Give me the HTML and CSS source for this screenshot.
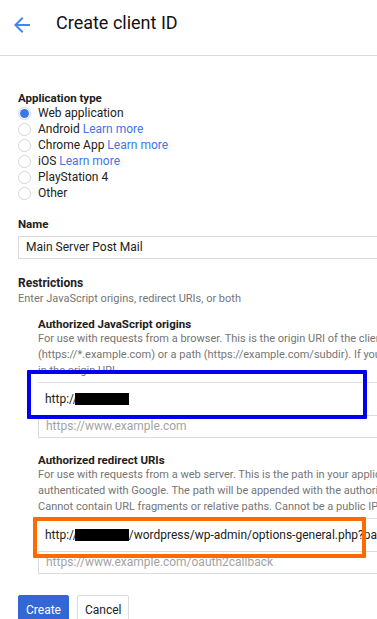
FILE: index.html
```html
<!DOCTYPE html>
<html lang="en">
<head>
  <meta charset="UTF-8">
  <meta name="viewport" content="width=device-width, initial-scale=1.0">
  <title>Create client ID</title>
  <link rel="stylesheet" href="styles.css">
</head>
<body>
  <header class="topbar">
    <svg class="back-icon" xmlns="http://www.w3.org/2000/svg" viewBox="0 0 24 24">
      <path d="M20 11H7.83l5.59-5.59L12 4l-8 8 8 8 1.41-1.41L7.83 13H20v-2z"/>
    </svg>
    <h1>Create client ID</h1>
  </header>

  <main class="content">
    <div class="field-label app-type">Application type</div>
    <div class="radio-list">
      <div class="radio-row"><span class="radio checked"></span>Web application</div>
      <div class="radio-row"><span class="radio"></span>Android&nbsp;<a class="link">Learn more</a></div>
      <div class="radio-row"><span class="radio"></span>Chrome App&nbsp;<a class="link">Learn more</a></div>
      <div class="radio-row"><span class="radio"></span>iOS&nbsp;<a class="link">Learn more</a></div>
      <div class="radio-row"><span class="radio"></span>PlayStation 4</div>
      <div class="radio-row"><span class="radio"></span>Other</div>
    </div>

    <div class="field-label name-label">Name</div>
    <div class="text-input">Main Server Post Mail</div>

    <h2 class="section-title">Restrictions</h2>
    <p class="hint">Enter JavaScript origins, redirect URIs, or both</p>

    <div class="uri-group origins">
      <div class="field-label">Authorized JavaScript origins</div>
      <div class="hint-lines">
        <div>For use with requests from a browser. This is the origin URI of the client application. It can't contain a wildcard</div>
        <div>(https://*.example.com) or a path (https://example.com/subdir). If you're using a nonstandard port, you must include it</div>
        <div>in the origin URI.</div>
      </div>
      <div class="uri-row">http://<span class="redacted"></span></div>
      <div class="uri-input">https://www.example.com</div>
      <div class="mark mark-blue"></div>
    </div>

    <div class="uri-group redirects">
      <div class="field-label">Authorized redirect URIs</div>
      <div class="hint-lines">
        <div>For use with requests from a web server. This is the path in your application that users are redirected to after they have</div>
        <div>authenticated with Google. The path will be appended with the authorization code for access. Must have a protocol.</div>
        <div>Cannot contain URL fragments or relative paths. Cannot be a public IP address.</div>
      </div>
      <div class="uri-row">http://<span class="redacted"></span>/wordpress/wp-admin/options-general.php?page=wp-mail-smtp</div>
      <div class="uri-input">https://www.example.com/oauth2callback</div>
      <div class="mark mark-orange"></div>
    </div>

    <div class="actions">
      <button class="btn btn-primary">Create</button>
      <button class="btn">Cancel</button>
    </div>
  </main>
</body>
</html>
```

FILE: styles.css
```css
/* base */
* {
  margin: 0;
  padding: 0;
  box-sizing: border-box;
}

html,
body {
  overflow: hidden;
}

body {
  font-family: Roboto, 'Liberation Sans', sans-serif;
  color: #212121;
  background-color: #fff;
}

/* header */
.topbar {
  display: flex;
  align-items: center;
  height: 56px;
  padding: 0 0 10px 10px;
  border-bottom: 1px solid #dadada;
}

.back-icon {
  width: 24px;
  height: 24px;
  margin-top: 5px;
  fill: #4285f4;
}

.topbar h1 {
  margin-left: 22px;
  font-size: 18px;
  font-weight: 400;
  color: #111;
}

/* form */
.content {
  width: 640px;
  padding-left: 18px;
}

.field-label {
  font-size: 11.5px;
  font-weight: 700;
  line-height: 14px;
}

.app-type {
  margin-top: 35px;
}

.radio-row {
  display: flex;
  align-items: center;
  height: 16px;
  font-size: 12px;
}

.radio {
  position: relative;
  width: 13px;
  height: 13px;
  margin-right: 7px;
  border: 1px solid #d6d6d6;
  border-radius: 50%;
}

.radio.checked::after {
  content: '';
  position: absolute;
  top: 1px;
  left: 1px;
  width: 9px;
  height: 9px;
  border-radius: 50%;
  background-color: #3b78e7;
}

.link {
  color: #3b78e7;
}

.name-label {
  margin-top: 16px;
}

.text-input {
  width: 600px;
  height: 23px;
  margin-top: 5px;
  padding-left: 7px;
  border: 1px solid #dadada;
  font-size: 12px;
  line-height: 21px;
}

.section-title {
  margin-top: 16px;
  font-size: 12px;
  font-weight: 700;
  line-height: 16px;
}

.hint {
  font-size: 11px;
  line-height: 16px;
  color: #757575;
}

/* uri lists */
.uri-group {
  position: relative;
  margin: 10px 0 0 20px;
}

.uri-group.redirects {
  margin-top: 15px;
}

.hint-lines {
  font-size: 11px;
  line-height: 16px;
  color: #757575;
  white-space: nowrap;
}

.uri-row {
  display: flex;
  align-items: center;
  height: 33px;
  margin-top: 3px;
  padding-left: 7px;
  border-top: 1px solid #e0e0e0;
  font-size: 12px;
  white-space: nowrap;
}

.redacted {
  display: inline-block;
  width: 54px;
  height: 12px;
  margin-left: -3px;
  background-color: #000;
}

.uri-input {
  height: 23px;
  padding-left: 7px;
  border: 1px solid #dadada;
  font-size: 12px;
  line-height: 21px;
  color: #a3a3a3;
}

/* annotation boxes drawn over the screenshot */
.mark {
  position: absolute;
  border: 4px solid;
  border-radius: 1px;
}

.mark-blue {
  left: -11px;
  top: 53px;
  width: 340px;
  height: 49px;
  border-color: #0000f0;
}

.mark-orange {
  left: -5px;
  top: 64px;
  width: 333px;
  height: 41px;
  border-color: #ff6a00;
}

/* buttons */
.actions {
  display: flex;
  gap: 8px;
  margin-top: 21px;
}

.btn {
  height: 30px;
  padding: 0 7px;
  border: 1px solid #dcdcdc;
  border-radius: 2px;
  background-color: #fff;
  font-family: Roboto, 'Liberation Sans', sans-serif;
  font-size: 12px;
  color: #212121;
}

.btn-primary {
  border-color: #3367d6;
  background-color: #3367d6;
  color: #fff;
}
```
